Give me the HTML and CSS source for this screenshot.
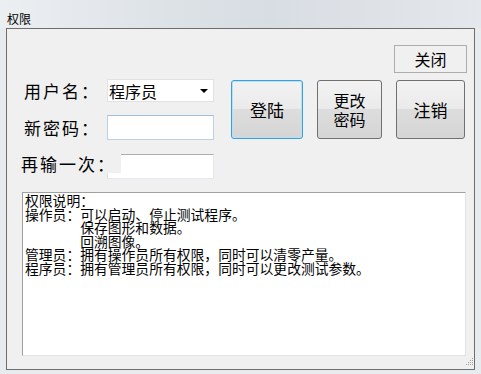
FILE: index.html
```html
<!DOCTYPE html>
<html lang="zh">
<head>
  <meta charset="UTF-8">
  <title>权限</title>
  <link rel="stylesheet" href="styles.css">
</head>
<body>
  <div class="titlebar"><span class="title">权限</span></div>

  <div class="frame">
    <div class="top-row">
      <button class="btn flat">关闭</button>
    </div>

    <div class="main">
      <!-- 用户输入 -->
      <div class="form">
        <div class="row">
          <label class="lbl">用户名：</label>
          <div class="combo"><span>程序员</span><span class="arrow"></span></div>
        </div>
        <div class="row r2">
          <label class="lbl">新密码：</label>
          <input class="field blue" type="password">
        </div>
        <div class="row r3">
          <label class="lbl over">再输一次：</label>
          <input class="field" type="password">
        </div>
      </div>

      <!-- 操作按钮 -->
      <div class="buttons">
        <button class="btn big focus">登陆</button>
        <button class="btn big narrow">更改<br>密码</button>
        <button class="btn big wide">注销</button>
      </div>
    </div>

    <div class="desc">权限说明：
操作员：可以启动、停止测试程序。
　　　　保存图形和数据。
　　　　回溯图像。
管理员：拥有操作员所有权限，同时可以清零产量。
程序员：拥有管理员所有权限，同时可以更改测试参数。</div>

    <div class="grip-row">
      <svg width="8" height="8" viewBox="0 0 8 8">
        <rect x="6" y="0" width="1" height="1" fill="#a0a0a0"/>
        <rect x="4" y="2" width="1" height="1" fill="#a0a0a0"/>
        <rect x="6" y="2" width="1" height="1" fill="#a0a0a0"/>
        <rect x="2" y="4" width="1" height="1" fill="#a0a0a0"/>
        <rect x="4" y="4" width="1" height="1" fill="#a0a0a0"/>
        <rect x="6" y="4" width="1" height="1" fill="#a0a0a0"/>
        <rect x="0" y="6" width="1" height="1" fill="#a0a0a0"/>
        <rect x="2" y="6" width="1" height="1" fill="#a0a0a0"/>
        <rect x="4" y="6" width="1" height="1" fill="#a0a0a0"/>
        <rect x="6" y="6" width="1" height="1" fill="#a0a0a0"/>
      </svg>
    </div>
  </div>
</body>
</html>
```

FILE: styles.css
```css
* {
  margin: 0;
  padding: 0;
  box-sizing: border-box;
  font-family: "Noto Sans CJK SC", "Noto Sans", sans-serif;
}
body {
  width: 481px;
  height: 374px;
  overflow: hidden;
  background-color: #e8ebee;
}
.titlebar {
  height: 28px;
  padding: 5px 0 0 7px;
  background: linear-gradient(90deg, #eceff2 0%, #dde2e7 35%, #d8dde3 55%, #e4e7eb 100%);
}
.title {
  font-size: 12px;
  line-height: 16px;
  color: #000;
}
.frame {
  margin: 0 6px;
  height: 342px;
  background-color: #f0f0f0;
  border: 1px solid #6e6e6e;
}
.top-row {
  display: flex;
  justify-content: flex-end;
  padding: 16px 7px 0 0;
}
.btn {
  color: #000;
  cursor: pointer;
}
.flat {
  width: 73px;
  height: 28px;
  font-size: 16px;
  line-height: 20px;
  background-color: #f0f0f0;
  border: 1px solid #adadad;
}
.main {
  display: flex;
  margin-top: 6px;
  padding-left: 14px;
}
.form {
  display: flex;
  flex-direction: column;
}
.row {
  display: flex;
  align-items: center;
  height: 23px;
}
.r2 {
  margin-top: 13px;
  height: 25px;
}
.r3 {
  margin-top: 14px;
  height: 25px;
}
.lbl {
  width: 86px;
  padding-left: 3px;
  font-size: 17px;
  line-height: 19px;
  letter-spacing: 2px;
  color: #000;
  white-space: nowrap;
}
.over {
  align-self: flex-start;
  width: 100px;
  height: 19px;
  margin-right: -14px;
  padding-left: 0;
  position: relative;
  z-index: 1;
  background-color: #f0f0f0;
}
.combo {
  display: flex;
  align-items: center;
  justify-content: space-between;
  width: 107px;
  height: 23px;
  padding: 0 5px 0 1px;
  background-color: #fff;
  border: 1px solid #e2e2e2;
  font-size: 16px;
  line-height: 20px;
}
.arrow {
  width: 0;
  height: 0;
  border-left: 4px solid transparent;
  border-right: 4px solid transparent;
  border-top: 4px solid #000;
}
.field {
  width: 107px;
  height: 25px;
  background-color: #fff;
  border: 1px solid #e3e9ef;
  border-top-color: #abadb3;
  border-left-color: #dbdfe6;
  outline: none;
}
.field.blue {
  border-color: #b9d2e8;
  border-top-color: #9fbfdb;
}
.buttons {
  display: flex;
  gap: 14px;
  margin: 1px 0 0 17px;
}
.big {
  width: 72px;
  height: 59px;
  font-size: 17px;
  line-height: 18px;
  border: 1px solid #707070;
  border-radius: 3px;
  background: linear-gradient(#f2f2f2 0%, #ebebeb 48%, #dddddd 50%, #d5d5d5 100%);
}
.focus {
  border-color: #3c9fdc;
  box-shadow: inset 0 0 0 1px #b4e1f8;
}
.narrow {
  width: 65px;
  font-size: 16px;
  line-height: 18.5px;
}
.wide {
  width: 69px;
}
.desc {
  width: 444px;
  height: 164px;
  margin: 13px 0 0 15px;
  padding: 1px 0 0 2px;
  background-color: #fff;
  border: 1px solid #e3e3e3;
  border-top-color: #a0a0a0;
  border-left-color: #a0a0a0;
  font-size: 13.8px;
  line-height: 13.6px;
  color: #000;
  white-space: pre;
}
.grip-row {
  display: flex;
  justify-content: flex-end;
  padding: 2px 0 0 0;
}
.grip-row svg {
  display: block;
}
```
